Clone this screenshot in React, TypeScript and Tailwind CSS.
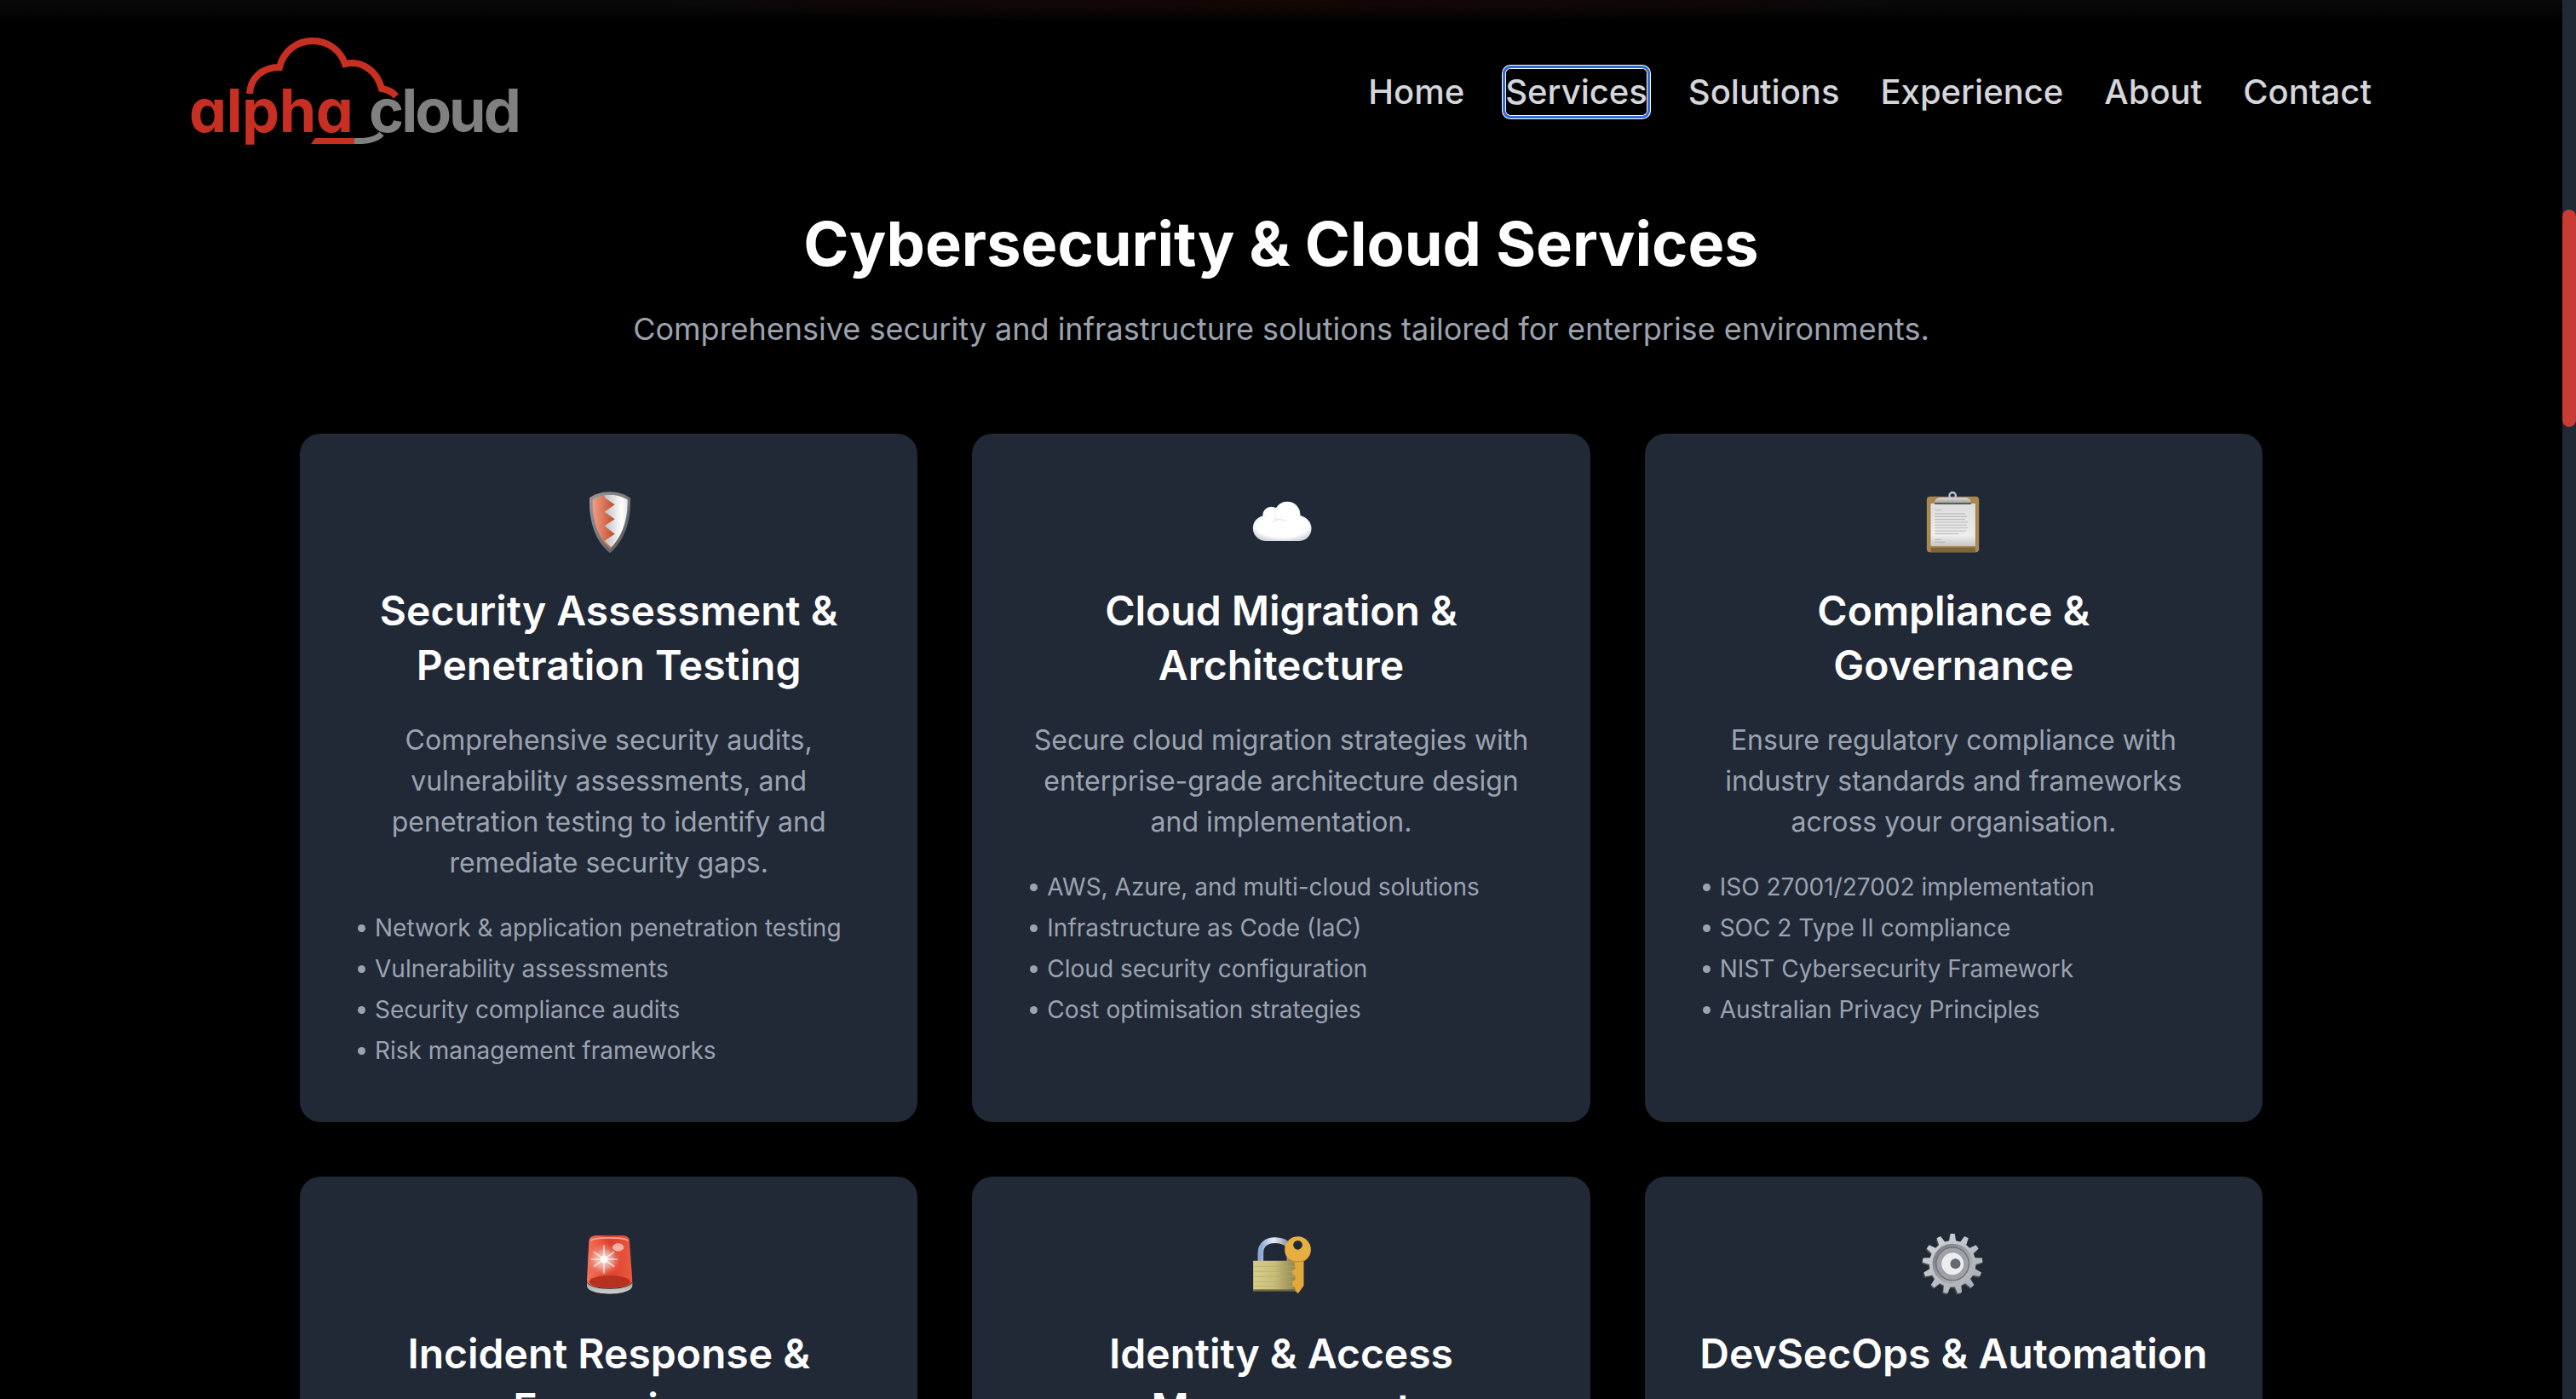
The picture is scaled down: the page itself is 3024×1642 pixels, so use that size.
import type { ReactNode } from 'react';

const navLinks = ['Home', 'Services', 'Solutions', 'Experience', 'About', 'Contact'];

const Logo = () => (
  <svg width="404" height="140" viewBox="40 38 404 140" className="-ml-1 shrink-0">
    <path
      d="M113 110 C114 92 127 79 148 79 C153 60 168 48 187 48 C206 48 220 60 225 75 C245 70 263 84 268 104 C274 105 281 108 285 113"
      fill="none"
      stroke="#c62f22"
      strokeWidth="8"
    />
    <path d="M185 169 L190 162 L236 162 L236 169 Z" fill="#c62f22" />
    <path d="M236 165.5 C250 166 262 164 268 157" fill="none" stroke="#808080" strokeWidth="7" />
    <text x="42" y="155" fill="#c62f22" fontSize="70" fontWeight="700" letterSpacing="-0.5" fontFamily="Inter, sans-serif" style={{ fontFeatureSettings: "'cv11'" }}>
      alpha
    </text>
    <text x="253" y="155" fill="#808080" fontSize="70" fontWeight="700" letterSpacing="-3" fontFamily="Inter, sans-serif">
      cloud
    </text>
  </svg>
);

const Header = () => (
  <header className="mx-auto flex h-[216px] w-[2560px] items-center justify-between">
    <Logo />
    <nav className="flex items-center gap-[48px] text-[40px] font-medium leading-[56px] text-[#d5d6dc]">
      {navLinks.map((link) => (
        <a
          key={link}
          href="#"
          className={
            link === 'Services'
              ? 'rounded-[6px] shadow-[0_0_0_4px_#fff,inset_0_0_0_1px_#fff] outline-[3px] outline-solid outline-[#2f6bd8]'
              : ''
          }
        >
          {link}
        </a>
      ))}
    </nav>
  </header>
);

const IconBox = ({ viewBox, children }: { viewBox: string; children: ReactNode }) => (
  <svg width="80" height="80" viewBox={viewBox} className="mx-auto mb-8 block">
    {children}
  </svg>
);

const ShieldIcon = () => (
  <IconBox viewBox="103 39 240 240">
    <defs>
      <linearGradient id="shieldEdge" x1="0" y1="0" x2="1" y2="1">
        <stop offset="0" stopColor="#9a9a9a" />
        <stop offset="1" stopColor="#555" />
      </linearGradient>
      <linearGradient id="shieldWhite" x1="0" y1="0" x2="1" y2="0">
        <stop offset="0.3" stopColor="#b9b9bd" />
        <stop offset="0.8" stopColor="#fff" />
        <stop offset="1" stopColor="#dcdcdc" />
      </linearGradient>
      <linearGradient id="shieldRed" x1="0" y1="0" x2="1" y2="0">
        <stop offset="0" stopColor="#f7a28a" />
        <stop offset="1" stopColor="#bd4d2e" />
      </linearGradient>
      <clipPath id="shieldClip">
        <path d="M226 62 C250 62 275 70 288 80 C290 155 265 215 226 252 C187 215 163 155 165 80 C178 70 205 62 226 62Z" />
      </clipPath>
    </defs>
    <path d="M226 52 C255 52 285 62 298 75 C300 160 275 225 226 268 C175 225 152 160 154 75 C165 62 195 52 226 52Z" fill="url(#shieldEdge)" />
    <g clipPath="url(#shieldClip)">
      <rect x="160" y="55" width="135" height="205" fill="url(#shieldWhite)" />
      <polygon points="160,55 207,55 207,72 243,97 207,122 243,148 207,172 243,200 207,224 232,250 226,262 160,262" fill="url(#shieldRed)" />
    </g>
  </IconBox>
);

const CloudIcon = () => (
  <IconBox viewBox="70.5 39 240 240">
    <defs>
      <radialGradient id="puff" cx="0.5" cy="0.42" r="0.6">
        <stop offset="0.72" stopColor="#fff" />
        <stop offset="1" stopColor="#d3d7dd" />
      </radialGradient>
    </defs>
    <circle cx="156" cy="135" r="31" fill="url(#puff)" />
    <circle cx="212" cy="132" r="46" fill="url(#puff)" />
    <path d="M140 225 C108 225 91 203 91 180 C91 155 110 136 136 136 C150 136 162 142 170 152 C185 140 205 148 212 152 C222 138 240 132 256 134 C280 140 297 158 297 180 C297 205 280 225 250 225 Z" fill="url(#puff)" />
    <path d="M160 160 C172 146 192 146 206 156" fill="none" stroke="#c3c8d0" strokeWidth="3" opacity="0.7" />
  </IconBox>
);

const ClipboardIcon = () => (
  <IconBox viewBox="100.5 39 240 240">
    <defs>
      <linearGradient id="paper" x1="0" y1="0" x2="0" y2="1">
        <stop offset="0" stopColor="#dcdcdc" />
        <stop offset="0.75" stopColor="#eeeeee" />
        <stop offset="1" stopColor="#c6c6c6" />
      </linearGradient>
      <linearGradient id="clipMetal" x1="0" y1="0" x2="0" y2="1">
        <stop offset="0" stopColor="#d6d8da" />
        <stop offset="1" stopColor="#a3a5a7" />
      </linearGradient>
    </defs>
    <rect x="127" y="68" width="184" height="197" rx="12" fill="#a9874f" />
    <rect x="141" y="248" width="157" height="17" fill="#806538" />
    <rect x="141" y="93" width="157" height="150" fill="url(#paper)" />
    <g stroke="#9a9a9a" strokeWidth="2">
      <path d="M156 116H180" />
      <path d="M156 129H262M156 139H268M156 149H262M156 159H272M156 169H268M156 179H272M156 189H266M156 199H240" />
      <path d="M156 220H178M156 229H192" />
    </g>
    <circle cx="218" cy="65" r="11" fill="none" stroke="#b9c4d2" strokeWidth="7" />
    <path d="M155 90 C155 78 165 72 175 72 H262 C275 72 283 80 283 90 Z" fill="url(#clipMetal)" />
    <rect x="155" y="90" width="128" height="6" fill="#5f5a52" />
  </IconBox>
);

const SirenIcon = () => (
  <IconBox viewBox="103 48 240 240">
    <defs>
      <linearGradient id="dome" x1="0" y1="0" x2="1" y2="0">
        <stop offset="0" stopColor="#f4735a" />
        <stop offset="0.5" stopColor="#dc3f29" />
        <stop offset="1" stopColor="#ea5a40" />
      </linearGradient>
      <linearGradient id="sirenBase" x1="0" y1="0" x2="0" y2="1">
        <stop offset="0" stopColor="#9d9d9d" />
        <stop offset="1" stopColor="#d2d2d2" />
      </linearGradient>
      <radialGradient id="flare">
        <stop offset="0" stopColor="#fff" stopOpacity="0.95" />
        <stop offset="0.5" stopColor="#fbd0c8" stopOpacity="0.6" />
        <stop offset="1" stopColor="#f26a50" stopOpacity="0" />
      </radialGradient>
    </defs>
    <path d="M145 225 C145 260 305 260 305 225 V240 C305 278 145 278 145 240 Z" fill="url(#sirenBase)" />
    <path d="M152 85 C152 70 165 63 180 63 H268 C284 63 295 70 295 85 L305 222 C305 258 145 258 145 222 Z" fill="url(#dome)" />
    <ellipse cx="225" cy="226" rx="72" ry="22" fill="#b8301f" />
    <path d="M158 82 C170 68 280 68 290 82" fill="none" stroke="#f9a592" strokeWidth="5" />
    <path d="M175 120 C195 95 240 100 250 130 C255 160 225 180 195 172 Z" fill="#b93322" opacity="0.55" />
    <circle cx="205" cy="147" r="62" fill="url(#flare)" />
    <ellipse cx="255" cy="105" rx="20" ry="14" fill="#f3b1a5" />
    <path d="M205 100V194M170 122L240 172M170 172L240 122M160 147H250" stroke="#fff" strokeWidth="5" strokeLinecap="round" opacity="0.7" />
    <circle cx="205" cy="147" r="13" fill="#fff" />
  </IconBox>
);

const LockIcon = () => (
  <IconBox viewBox="70.5 48 240 240">
    <defs>
      <linearGradient id="shackle" x1="0" y1="0" x2="1" y2="0">
        <stop offset="0" stopColor="#8ca9d6" />
        <stop offset="0.45" stopColor="#e8edf3" />
        <stop offset="1" stopColor="#7c8796" />
      </linearGradient>
      <linearGradient id="lockBody" x1="0" y1="0" x2="1" y2="0">
        <stop offset="0" stopColor="#d8cf8a" />
        <stop offset="0.5" stopColor="#c9bd78" />
        <stop offset="1" stopColor="#8f8552" />
      </linearGradient>
    </defs>
    <path d="M118 155 V125 C118 95 140 80 170 80 C195 80 212 90 220 105 V155" fill="none" stroke="url(#shackle)" strokeWidth="20" />
    <rect x="92" y="152" width="150" height="107" rx="2" fill="url(#lockBody)" />
    <rect x="92" y="253" width="150" height="6" fill="#6f6739" />
    <g stroke="#b5aa68" strokeWidth="2">
      <path d="M94 172H238M94 190H238M94 208H238M94 226H238M94 242H238" />
    </g>
    <path d="M236 150 H270 V240 L250 268 L240 258 V246 L230 240 V224 L240 218 V206 L230 200 V186 L240 180 Z" fill="#e0a93c" />
    <circle cx="249" cy="113" r="46" fill="#e7af41" />
    <circle cx="249" cy="97" r="16" fill="#212937" />
    <path d="M214 142 C228 160 270 160 284 142" fill="none" stroke="#b98524" strokeWidth="3" />
  </IconBox>
);

const gearPath = (() => {
  const pts: string[] = [];
  const teeth = 13;
  for (let i = 0; i < teeth; i++) {
    const a = (i / teeth) * Math.PI * 2 - Math.PI / 2;
    const step = (Math.PI * 2) / teeth;
    const at = (r: number, t: number) =>
      `${(218 + r * Math.cos(t)).toFixed(1)},${(163 + r * Math.sin(t)).toFixed(1)}`;
    pts.push(at(82, a - step * 0.3), at(106, a - step * 0.15), at(106, a + step * 0.15), at(82, a + step * 0.3));
  }
  return pts.join(' ');
})();

const GearIcon = () => (
  <IconBox viewBox="100.5 48 240 240">
    <defs>
      <linearGradient id="gearFace" x1="0" y1="0" x2="1" y2="1">
        <stop offset="0" stopColor="#d5d8dd" />
        <stop offset="1" stopColor="#a3a7af" />
      </linearGradient>
      <linearGradient id="gearRing" x1="0" y1="0" x2="1" y2="1">
        <stop offset="0" stopColor="#74777d" />
        <stop offset="1" stopColor="#c3c5c9" />
      </linearGradient>
    </defs>
    <polygon points={gearPath} fill="#4b4a48" transform="translate(-3 5)" />
    <polygon points={gearPath} fill="url(#gearFace)" />
    <circle cx="218" cy="163" r="71" fill="url(#gearRing)" />
    <circle cx="218" cy="163" r="58" fill="#9ea1a7" stroke="#6e7177" strokeWidth="4" />
    <circle cx="218" cy="163" r="39" fill="#eceded" />
    <circle cx="228" cy="163" r="18" fill="#666972" />
  </IconBox>
);

type Service = { title: string; icon: ReactNode; text?: string; items?: string[] };

const services: Service[] = [
  {
    title: 'Security Assessment & Penetration Testing',
    icon: <ShieldIcon />,
    text: 'Comprehensive security audits, vulnerability assessments, and penetration testing to identify and remediate security gaps.',
    items: ['Network & application penetration testing', 'Vulnerability assessments', 'Security compliance audits', 'Risk management frameworks'],
  },
  {
    title: 'Cloud Migration & Architecture',
    icon: <CloudIcon />,
    text: 'Secure cloud migration strategies with enterprise-grade architecture design and implementation.',
    items: ['AWS, Azure, and multi-cloud solutions', 'Infrastructure as Code (IaC)', 'Cloud security configuration', 'Cost optimisation strategies'],
  },
  {
    title: 'Compliance & Governance',
    icon: <ClipboardIcon />,
    text: 'Ensure regulatory compliance with industry standards and frameworks across your organisation.',
    items: ['ISO 27001/27002 implementation', 'SOC 2 Type II compliance', 'NIST Cybersecurity Framework', 'Australian Privacy Principles'],
  },
  { title: 'Incident Response & Forensics', icon: <SirenIcon /> },
  { title: 'Identity & Access Management', icon: <LockIcon /> },
  { title: 'DevSecOps & Automation', icon: <GearIcon /> },
];

const ServiceCard = ({ service }: { service: Service }) => (
  <article className="rounded-[24px] bg-[#212937] p-16 text-center">
    {service.icon}
    <h3 className="mb-8 text-[48px] font-semibold leading-[64px] text-white">{service.title}</h3>
    {service.text && <p className="mb-8 text-[32px] leading-[48px] text-[#9ca3af]">{service.text}</p>}
    {service.items && (
      <ul className="flex flex-col gap-2 text-left text-[28px] leading-[40px] text-[#9ca3af]">
        {service.items.map((item) => (
          <li key={item} className="flex items-center gap-[11px] pl-1">
            <span className="size-[9px] shrink-0 rounded-full bg-[#9ca3af]" />
            {item}
          </li>
        ))}
      </ul>
    )}
  </article>
);

export default function App() {
  return (
    <div className="flex h-[1642px] overflow-hidden bg-black [font-family:Inter,sans-serif]">
      <div className="min-w-0 flex-1 bg-[radial-gradient(ellipse_800px_26px_at_50%_0,#160505,transparent),linear-gradient(to_bottom,#0a0a0a,#000_26px)]">
        <Header />
        <main className="mx-auto w-[2304px]">
          <h1 className="mt-[30px] text-center text-[72px] font-bold leading-[80px] text-white">
            Cybersecurity &amp; Cloud Services
          </h1>
          <p className="mt-[32px] text-center text-[36px] leading-[56px] text-[#9ca3af]">
            Comprehensive security and infrastructure solutions tailored for enterprise environments.
          </p>
          <div className="mt-[95px] grid grid-cols-3 gap-16">
            {services.map((service) => (
              <ServiceCard key={service.title} service={service} />
            ))}
          </div>
        </main>
      </div>
      <div className="w-4 shrink-0 bg-[#212937]">
        <div className="mt-[246px] h-[255px] rounded-full bg-[#c93c33]" />
      </div>
    </div>
  );
}
